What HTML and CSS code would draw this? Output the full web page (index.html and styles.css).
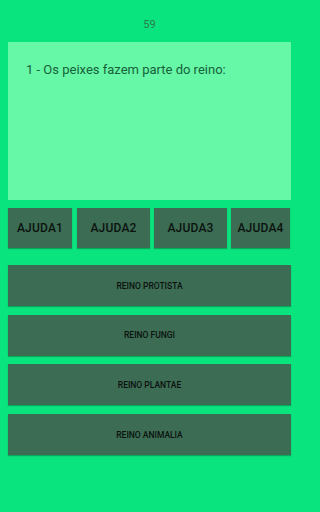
FILE: index.html
```html
<!DOCTYPE html>
<html lang="pt">
<head>
<meta charset="utf-8">
<link rel="stylesheet" href="styles.css">
</head>
<body>
<div class="screen">
  <div class="timer">59</div>
  <div class="card">
    <p class="question">1 - Os peixes fazem parte do reino:</p>
  </div>
  <div class="helps">
    <button class="help">AJUDA1</button>
    <button class="help">AJUDA2</button>
    <button class="help">AJUDA3</button>
    <button class="help">AJUDA4</button>
  </div>
  <div class="answers">
    <button class="answer">REINO PROTISTA</button>
    <button class="answer">REINO FUNGI</button>
    <button class="answer">REINO PLANTAE</button>
    <button class="answer">REINO ANIMALIA</button>
  </div>
</div>
</body>
</html>
```
FILE: styles.css
```css
html, body {
  margin: 0;
  padding: 0;
  background: #0ae47e;
  font-family: Roboto, "Liberation Sans", sans-serif;
}
.screen {
  width: 299px;
  height: 512px;
  display: flex;
  flex-direction: column;
}
.timer {
  height: 42px;
  box-sizing: border-box;
  padding-top: 18px;
  text-align: center;
  font-size: 11px;
  line-height: 13px;
  color: #2b7a4d;
}
.card {
  margin: 0 8px;
  height: 158px;
  box-sizing: border-box;
  background: #66f7a7;
  padding: 20px 18px;
}
.question {
  margin: 0;
  font-size: 13px;
  line-height: 15px;
  color: #17623a;
}
.helps {
  margin: 8px 8px 0;
  display: grid;
  grid-template-columns: 65px 73px 73px 59px;
  column-gap: 4px;
}
.helps .help:first-child {
  margin-right: 1px;
}
.help, .answer {
  border: none;
  margin: 0;
  padding: 0;
  background: #3c6c54;
  color: #0b120e;
  font-family: Roboto, "Liberation Sans", sans-serif;
  box-shadow: 0 1px 1px rgba(0, 60, 30, 0.35);
}
.help {
  height: 40px;
  font-size: 12px;
  font-weight: 500;
  letter-spacing: 0.2px;
}
.answers {
  margin: 17px 8px 0;
  display: flex;
  flex-direction: column;
  gap: 8.7px;
}
.answer {
  height: 41px;
  font-size: 8.5px;
  font-weight: 500;
}
```
